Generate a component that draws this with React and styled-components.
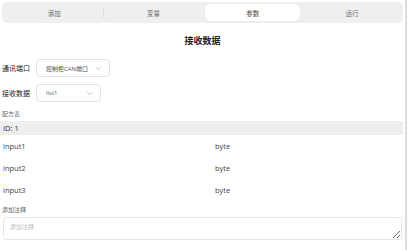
import React, { useState } from "react";
import styled, { createGlobalStyle } from "styled-components";

const GlobalStyle = createGlobalStyle`
  html, body {
    margin: 0;
    padding: 0;
    background: #ffffff;
  }
  body {
    font-family: "Open Sans", "Noto Sans CJK SC", sans-serif;
  }
`;

const TABS = ["添加", "变量", "参数", "运行"];

const ROWS = [
  { name: "input1", type: "byte" },
  { name: "input2", type: "byte" },
  { name: "input3", type: "byte" },
];

const Chevron = () => (
  <svg width="7" height="5" viewBox="0 0 7 5">
    <path d="M1 1.2 L3.5 3.6 L6 1.2" fill="none" stroke="#bdbdbd" strokeWidth="0.8" />
  </svg>
);

const App = () => {
  const [activeTab, setActiveTab] = useState(2);

  return (
    <Page>
      <GlobalStyle />
      <Main>
        <TabBar>
          {TABS.map((tab, idx) => (
            <Tab
              key={tab}
              $active={idx === activeTab}
              $divider={idx > 0 && idx !== activeTab && idx - 1 !== activeTab}
              onClick={() => setActiveTab(idx)}
            >
              {tab}
            </Tab>
          ))}
        </TabBar>

        <Title>接收数据</Title>

        <FormRow $top={12}>
          <Label>通讯端口</Label>
          <Select $width={74}>
            <span>控制柜CAN端口</span>
            <Chevron />
          </Select>
        </FormRow>
        <FormRow $top={7}>
          <Label>接收数据</Label>
          <Select $width={65}>
            <span>list1</span>
            <Chevron />
          </Select>
        </FormRow>

        <SmallLabel>配方表</SmallLabel>
        <IdRow>ID: 1</IdRow>
        {ROWS.map((row) => (
          <DataRow key={row.name}>
            <span>{row.name}</span>
            <span>{row.type}</span>
          </DataRow>
        ))}

        <SmallLabel $top={4}>添加注释</SmallLabel>
        <Comment placeholder="添加注释" />
      </Main>
      <ScrollTrack />
    </Page>
  );
};

const Page = styled.div`
  display: flex;
  width: 408px;
  height: 250px;
  overflow: hidden;
`;

const Main = styled.div`
  width: 405px;
  display: flex;
  flex-direction: column;
`;

const ScrollTrack = styled.div`
  width: 2px;
  background: #dcdcdc;
  margin-right: 1px;
`;

const TabBar = styled.div`
  display: grid;
  grid-template-columns: repeat(4, 1fr);
  margin: 2px 2px 0 2px;
  height: 21px;
  padding: 2px;
  box-sizing: border-box;
  background: #efefef;
  border-radius: 5px;
`;

const Tab = styled.div`
  display: flex;
  align-items: center;
  justify-content: center;
  margin: 0 ${(p) => (p.$active ? "2px" : "0")};
  font-size: 6.5px;
  color: ${(p) => (p.$active ? "#444" : "#666")};
  background: ${(p) => (p.$active ? "#ffffff" : "transparent")};
  border-radius: 5px;
  box-shadow: ${(p) => (p.$active ? "0 0 1px rgba(0,0,0,0.15)" : "none")};
  cursor: pointer;
  border-left: 1px solid ${(p) => (p.$divider ? "#dedede" : "transparent")};
`;

const Title = styled.div`
  margin-top: 12px;
  text-align: center;
  font-size: 9px;
  font-weight: bold;
  line-height: 12px;
  color: #222;
  font-family: "Noto Sans CJK SC", sans-serif;
`;

const FormRow = styled.div`
  display: flex;
  align-items: center;
  margin-top: ${(p) => p.$top}px;
  padding-left: 2px;
`;

const Label = styled.div`
  width: 34px;
  font-size: 7px;
  color: #222;
  font-family: "Noto Sans CJK SC", sans-serif;
`;

const Select = styled.div`
  display: flex;
  align-items: center;
  justify-content: space-between;
  width: ${(p) => p.$width}px;
  height: 18px;
  box-sizing: border-box;
  padding: 0 7px 0 9px;
  border: 1px solid #e3e3e3;
  border-radius: 4px;
  font-size: 6px;
  color: #555;
`;

const SmallLabel = styled.div`
  margin-top: ${(p) => (p.$top ? p.$top : 7)}px;
  padding-left: 2px;
  font-size: 6px;
  line-height: 9px;
  color: #666;
  font-family: "Noto Sans CJK SC", sans-serif;
`;

const IdRow = styled.div`
  margin: 3px 2px 0 0;
  height: 14px;
  display: flex;
  align-items: center;
  padding-left: 3px;
  background: #eeeeee;
  font-size: 7.5px;
  color: #333;
`;

const DataRow = styled.div`
  display: grid;
  grid-template-columns: 212px 1fr;
  align-items: center;
  height: 22px;
  padding-left: 3px;
  font-size: 7.5px;
  color: #444;
`;

const Comment = styled.textarea`
  margin: 3px 3px 0 3px;
  height: 23px;
  box-sizing: border-box;
  padding: 4px 6px;
  border: 1px solid #e6e6e6;
  border-radius: 3px;
  font-size: 6px;
  font-family: "Noto Sans CJK SC", sans-serif;
  outline: none;
  &::placeholder {
    color: #c0c0c0;
  }
`;

export default App;
